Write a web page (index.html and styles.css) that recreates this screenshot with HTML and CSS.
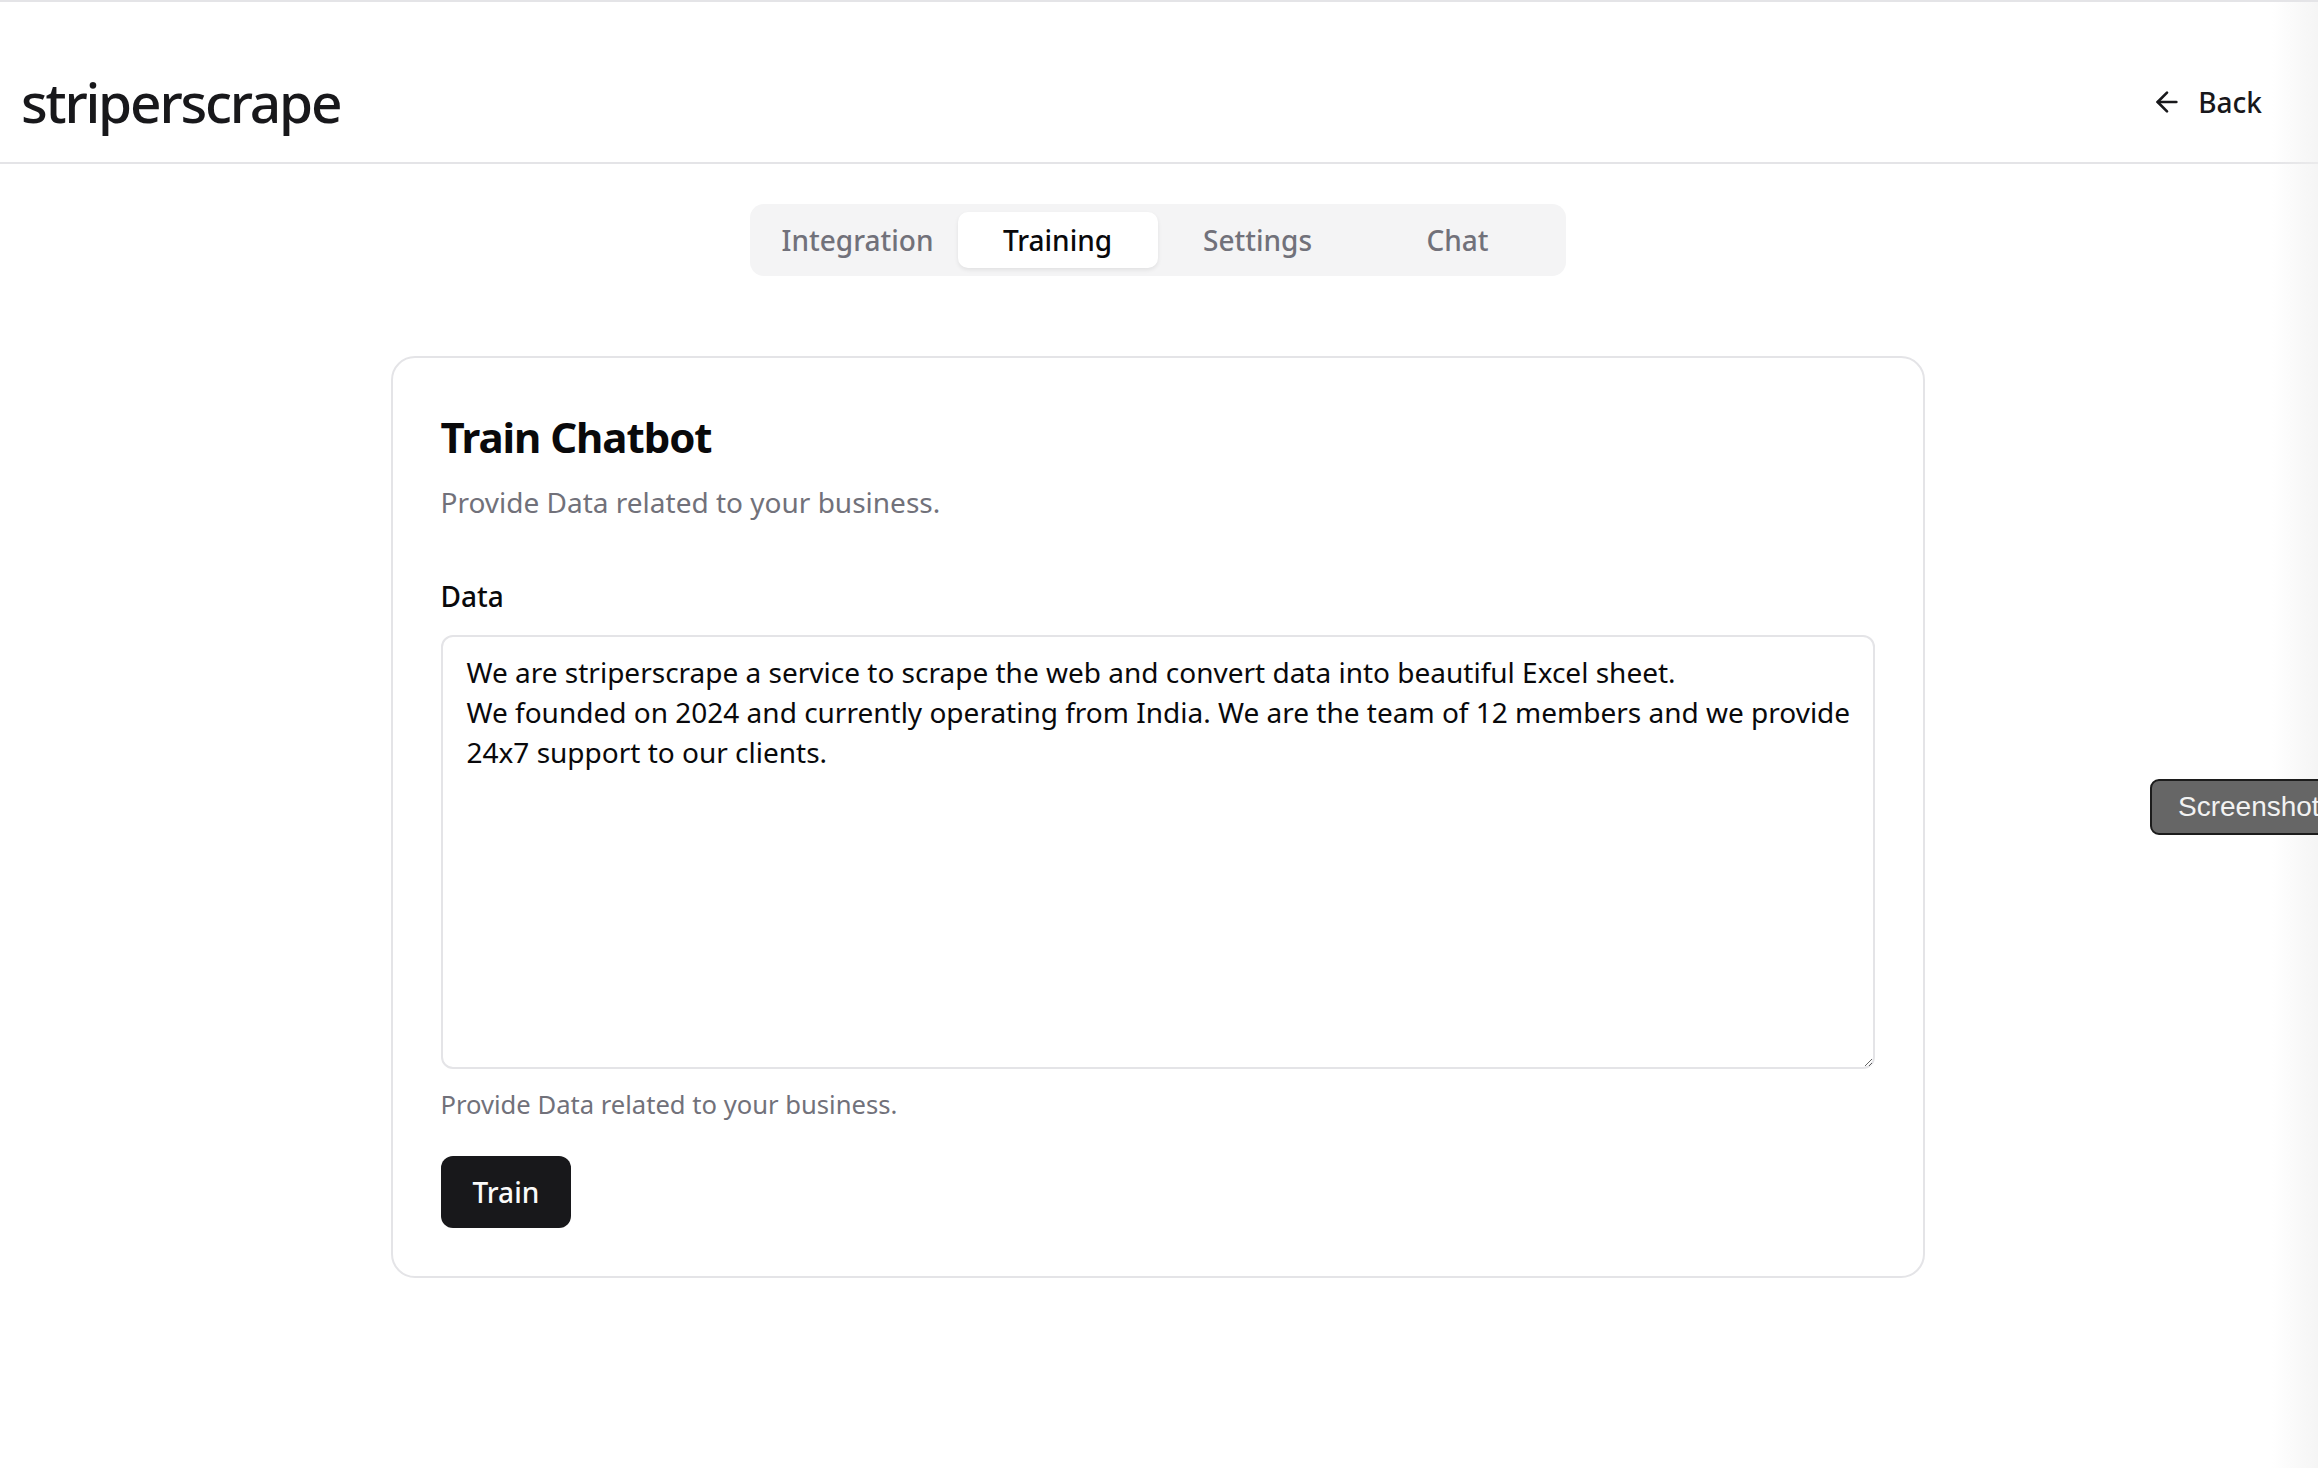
FILE: index.html
```html
<!DOCTYPE html>
<html lang="en">
<head>
<meta charset="utf-8">
<title>striperscrape – Training</title>
<link rel="stylesheet" href="styles.css">
</head>
<body>
<div class="page">
  <header class="topbar">
    <div class="logo">striperscrape</div>
    <button class="back-btn" type="button">
      <svg class="back-icon" viewBox="0 0 24 24" fill="none" stroke="currentColor" stroke-width="2" stroke-linecap="round" stroke-linejoin="round"><path d="m12 19-7-7 7-7"/><path d="M19 12H5"/></svg>
      <span>Back</span>
    </button>
  </header>

  <main class="main">
    <nav class="tabs">
      <div class="tab">Integration</div>
      <div class="tab tab-active">Training</div>
      <div class="tab">Settings</div>
      <div class="tab">Chat</div>
    </nav>

    <section class="card">
      <h1 class="card-title">Train Chatbot</h1>
      <p class="card-desc">Provide Data related to your business.</p>

      <form class="form">
        <label class="label" for="data">Data</label>
        <textarea id="data" class="textarea">We are striperscrape a service to scrape the web and convert data into beautiful Excel sheet.
We founded on 2024 and currently operating from India. We are the team of 12 members and we provide 24x7 support to our clients.</textarea>
        <p class="helper">Provide Data related to your business.</p>
        <button class="train-btn" type="button">Train</button>
      </form>
    </section>
  </main>

  <div class="edge-shade"></div>
  <div class="shot-btn">Screenshot</div>
</div>
</body>
</html>
```
FILE: styles.css
```css
* { box-sizing: border-box; }

html, body {
  margin: 0;
  padding: 0;
  background: #ffffff;
}

body {
  font-family: "Noto Sans", "Open Sans", sans-serif;
  color: #09090b;
}

.page {
  position: relative;
  min-height: 1468px;
  border-top: 2px solid #e4e4e7;
  overflow: hidden;
}

/* header */
.topbar {
  height: 162px;
  padding: 40px 24px 0 21px;
  display: flex;
  align-items: center;
  justify-content: space-between;
  border-bottom: 2px solid #e4e4e7;
}

.logo {
  font-size: 55px;
  font-weight: 500;
  letter-spacing: -0.04em;
  line-height: 1;
  color: #18181b;
  margin-top: -2px;
}

.back-btn {
  display: flex;
  align-items: center;
  gap: 15px;
  height: 80px;
  padding: 0 32px;
  border: none;
  background: transparent;
  font-family: inherit;
  font-size: 28px;
  font-weight: 500;
  color: #18181b;
}

.back-icon {
  width: 32px;
  height: 32px;
}

/* main */
.main {
  display: flex;
  flex-direction: column;
  align-items: center;
  padding-top: 40px;
  padding-right: 3px;
}

.tabs {
  width: 816px;
  height: 72px;
  padding: 8px;
  background: #f4f4f5;
  border-radius: 14px;
  display: grid;
  grid-template-columns: repeat(4, 1fr);
}

.tab {
  display: flex;
  align-items: center;
  justify-content: center;
  font-size: 28px;
  font-weight: 500;
  color: #71717a;
  border-radius: 10px;
}

.tab-active {
  background: #ffffff;
  color: #09090b;
  box-shadow: 0 2px 4px rgba(0, 0, 0, 0.08);
}

.card {
  margin-top: 80px;
  width: 1534px;
  border: 2px solid #e4e4e7;
  border-radius: 24px;
  padding: 48px;
  background: #ffffff;
}

.card-title {
  margin: 0;
  padding-top: 1px;
  font-size: 42px;
  line-height: 60px;
  font-weight: 700;
  letter-spacing: -0.025em;
  color: #09090b;
}

.card-desc {
  margin: 15px 0 0;
  font-size: 28px;
  line-height: 40px;
  color: #71717a;
}

.form {
  display: flex;
  flex-direction: column;
  align-items: flex-start;
  margin-top: 60px;
}

.label {
  font-size: 28px;
  line-height: 28px;
  font-weight: 500;
  color: #09090b;
}

.textarea {
  margin-top: 25px;
  width: 100%;
  height: 434px;
  border: 2px solid #e4e4e7;
  border-radius: 12px;
  padding: 15px 20px 16px 24px;
  font-family: "Noto Sans", "Open Sans", sans-serif;
  font-size: 28px;
  line-height: 40px;
  color: #09090b;
  background: #ffffff;
  resize: vertical;
  outline: none;
}

.helper {
  margin: 17px 0 0;
  font-size: 25.6px;
  line-height: 38px;
  color: #71717a;
}

.train-btn {
  margin-top: 32px;
  height: 72px;
  padding: 0 32px;
  border: none;
  border-radius: 12px;
  background: #18181b;
  color: #fafafa;
  font-family: inherit;
  font-size: 28px;
  font-weight: 500;
}

/* overlays */
.edge-shade {
  position: absolute;
  top: 0;
  right: 0;
  width: 46px;
  height: 100%;
  background: linear-gradient(to right, rgba(240, 240, 240, 0), rgba(238, 238, 238, 0.6));
  pointer-events: none;
}

.shot-btn {
  position: absolute;
  left: 2150px;
  top: 777px;
  width: 200px;
  height: 56px;
  padding-left: 26px;
  display: flex;
  align-items: center;
  background: #666666;
  border: 2px solid #1c1c1c;
  border-radius: 9px;
  color: #f2f2f2;
  font-family: "Liberation Sans", Arial, sans-serif;
  font-size: 28px;
  white-space: nowrap;
}
```
